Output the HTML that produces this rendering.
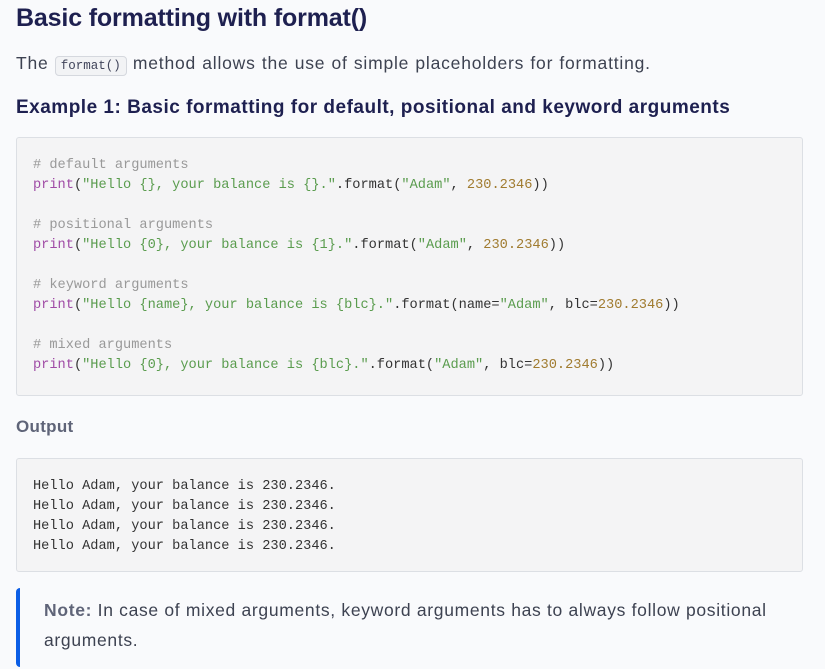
<!DOCTYPE html>
<html><head><style>
html,body{margin:0;padding:0;background:#f9fafc;width:825px;height:669px;overflow:hidden;font-family:"Liberation Sans",sans-serif;}
.h1{position:absolute;left:16px;top:4px;font-size:25px;font-weight:bold;color:#1e2050;letter-spacing:-0.15px}
.p{position:absolute;left:16px;top:53px;font-size:17.5px;color:#3d4251;letter-spacing:0.8px;word-spacing:0.5px}
.p code{font-family:"Liberation Mono",monospace;font-size:12.5px;background:#f2f3f5;border:1px solid #d5d8de;border-radius:4px;padding:2px 5px;color:#40445a;letter-spacing:0}
.h3{position:absolute;left:16px;top:97px;font-size:19px;font-weight:bold;color:#1e2050;letter-spacing:0.5px}
.code{position:absolute;left:16px;width:787px;background:#f4f4f5;border:1px solid #dcdfe4;border-radius:3px;box-sizing:border-box;}
pre{margin:0;font-family:"Liberation Mono",monospace;font-size:13.65px;line-height:20px;color:#333;position:absolute;left:16px;}
.c{color:#999}.f{color:#a04ca6}.s{color:#5a9c4e}.n{color:#a07b2f}
.out{position:absolute;left:16px;top:417px;font-size:17px;font-weight:bold;color:#5f6478;letter-spacing:0.3px}
.note{position:absolute;left:16px;top:588px;width:787px;height:79px;border-left:4px solid #0b5ee6;border-radius:4px;box-sizing:border-box;padding:7px 0 0 24px;font-size:17.5px;color:#3d4251;line-height:30px;letter-spacing:0.68px}
.note b{color:#5f6478}
</style></head><body>
<div class="h1">Basic formatting with format()</div>
<div class="p">The <code>format()</code> method allows the use of simple placeholders for formatting.</div>
<div class="h3">Example 1: Basic formatting for default, positional and keyword arguments</div>
<div class="code" style="top:137px;height:259px">
<pre style="top:18px"><span class="c"># default arguments</span>
<span class="f">print</span>(<span class="s">"Hello {}, your balance is {}."</span>.format(<span class="s">"Adam"</span>, <span class="n">230.2346</span>))

<span class="c"># positional arguments</span>
<span class="f">print</span>(<span class="s">"Hello {0}, your balance is {1}."</span>.format(<span class="s">"Adam"</span>, <span class="n">230.2346</span>))

<span class="c"># keyword arguments</span>
<span class="f">print</span>(<span class="s">"Hello {name}, your balance is {blc}."</span>.format(name=<span class="s">"Adam"</span>, blc=<span class="n">230.2346</span>))

<span class="c"># mixed arguments</span>
<span class="f">print</span>(<span class="s">"Hello {0}, your balance is {blc}."</span>.format(<span class="s">"Adam"</span>, blc=<span class="n">230.2346</span>))</pre>
</div>
<div class="out">Output</div>
<div class="code" style="top:458px;height:114px">
<pre style="top:18px">Hello Adam, your balance is 230.2346.
Hello Adam, your balance is 230.2346.
Hello Adam, your balance is 230.2346.
Hello Adam, your balance is 230.2346.</pre>
</div>
<div class="note"><b>Note:</b> In case of mixed arguments, keyword arguments has to always follow positional arguments.</div>
</body></html>
